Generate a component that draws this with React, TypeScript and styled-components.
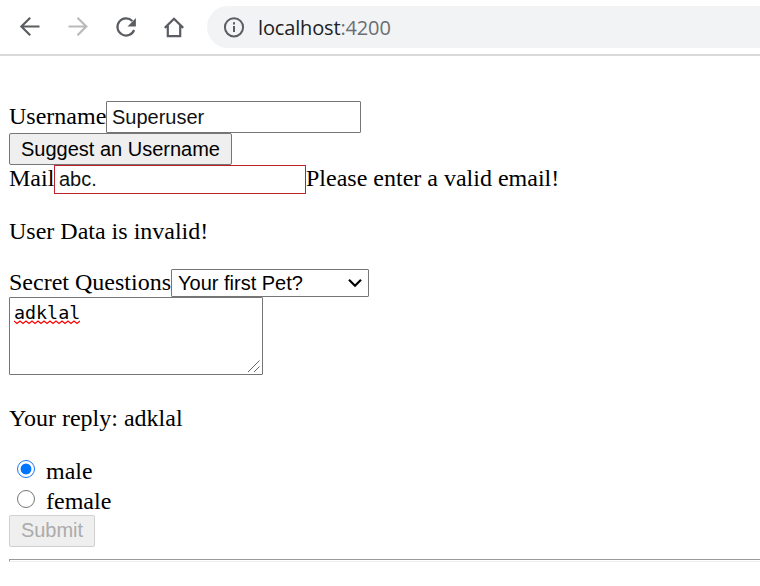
import React, { useState } from "react";
import styled, { createGlobalStyle } from "styled-components";

const GlobalStyle = createGlobalStyle`
  * { box-sizing: border-box; }
  body { margin: 0; background: #fff; color: #000; overflow: hidden; }
`;

const Page = styled.div`
  width: 100%;
  height: 586px;
  overflow: hidden;
  font: 24px/28px "Liberation Serif", "Times New Roman", serif;
`;

const Toolbar = styled.header`
  display: flex;
  align-items: center;
  height: 56px;
  padding-left: 18px;
  border-bottom: 2px solid #d9dadc;
`;

const NavButton = styled.button<{ $muted?: boolean }>`
  display: flex;
  width: 24px;
  height: 24px;
  margin-right: 24px;
  padding: 0;
  border: 0;
  background: none;
  color: ${(p) => (p.$muted ? "#b8babc" : "#5a5d61")};
`;

const AddressBar = styled.div`
  display: flex;
  align-items: center;
  flex: 1;
  height: 42px;
  margin-left: -3px;
  padding-left: 16px;
  border-radius: 21px 0 0 21px;
  background: #f1f3f4;
  color: #202124;
  font: 20px/28px "Open Sans", "Noto Sans", sans-serif;
`;

const Url = styled.span`
  margin-left: 13px;
  padding-top: 2px;
  letter-spacing: -0.15px;
  span { color: #6b6e72; }
`;

const Form = styled.form`
  display: flex;
  flex-direction: column;
  align-items: flex-start;
  padding: 45px 0 0 9px;
`;

const Row = styled.div<{ $height: number; $gap?: number; $shift?: number }>`
  display: flex;
  align-items: flex-start;
  width: 100%;
  height: ${(p) => p.$height}px;
  margin-top: ${(p) => p.$gap ?? 0}px;
  > label, > span { margin-top: ${(p) => p.$shift ?? 0}px; }
`;

const Label = styled.label<{ $width?: number }>`
  flex: none;
  width: ${(p) => (p.$width ? `${p.$width}px` : "auto")};
  white-space: nowrap;
`;

const Message = styled.p<{ $gap: number }>`
  margin: ${(p) => p.$gap}px 0 0;
`;

const TextInput = styled.input<{ $invalid?: boolean }>`
  appearance: none;
  width: ${(p) => (p.$invalid ? 252 : 255)}px;
  height: ${(p) => (p.$invalid ? 29 : 32)}px;
  margin: 0;
  padding: 0 ${(p) => (p.$invalid ? 4 : 5)}px;
  border: 1px solid ${(p) => (p.$invalid ? "#c02028" : "#767676")};
  border-radius: ${(p) => (p.$invalid ? 0 : 1)}px;
  outline: 0;
  background: #fff;
  color: #111;
  font: 20px "Liberation Sans", Arial, sans-serif;
`;

const PushButton = styled.button<{ $width: number }>`
  width: ${(p) => p.$width}px;
  height: 32px;
  padding: 0;
  border: 1px solid #767676;
  border-radius: 2px;
  background: #efefef;
  color: #000;
  font: 20px "Liberation Sans", Arial, sans-serif;
  &:disabled { padding-bottom: 2px; border-color: #d0d0d0; color: #ababab; }
`;

const SelectBox = styled.div`
  display: grid;
  width: 198px;
  height: 28px;
  > * { grid-area: 1 / 1; }
  > svg { justify-self: end; align-self: center; margin-right: 6px; pointer-events: none; }
`;

const Select = styled.select`
  appearance: none;
  padding: 0 6px;
  border: 1px solid #767676;
  border-radius: 1px;
  background: #fff;
  color: #000;
  font: 20px "Liberation Sans", Arial, sans-serif;
`;

const AnswerBox = styled.div`
  display: grid;
  width: 254px;
  height: 78px;
  > * { grid-area: 1 / 1; }
  > svg { pointer-events: none; }
`;

const Answer = styled.textarea`
  resize: none;
  margin: 0;
  padding: 3px 4px;
  border: 1px solid #767676;
  border-radius: 1px;
  outline: 0;
  background: #fff;
  color: #000;
  font: 18.33px/24px "DejaVu Sans Mono", Consolas, monospace;
`;

const SpellingMark = styled.svg`
  margin: 23px 0 0 5px;
`;

const Grip = styled.svg`
  place-self: end;
  margin: 0 2px 2px 0;
`;

const Radio = styled.input`
  appearance: none;
  flex: none;
  width: 18px;
  height: 18px;
  margin: 3px 11px 0 8px;
  border: 1.5px solid #767676;
  border-radius: 50%;
  background: #fff;
  &:checked {
    border-color: #1a78f2;
    background: radial-gradient(circle, #0075ff 5px, #fff 5.8px);
  }
`;

const Divider = styled.hr`
  align-self: stretch;
  height: 3px;
  margin: 12px 0 0;
  border: 1px solid #9a9a9a;
  border-right: 0;
  border-bottom-color: #eee;
`;

const BackIcon = () => (
  <svg width="24" height="24" viewBox="0 0 24 24" fill="none" stroke="currentColor" strokeWidth="2.2">
    <path d="M21.5 11.5H4M12.2 2.7L3.4 11.5l8.8 8.8" />
  </svg>
);

const ForwardIcon = () => (
  <svg width="24" height="24" viewBox="0 0 24 24" fill="none" stroke="currentColor" strokeWidth="2.2">
    <path d="M2.5 11.5H20M11.5 2.7l8.8 8.8-8.8 8.8" />
  </svg>
);

const ReloadIcon = () => (
  <svg width="24" height="24" viewBox="0 0 24 24" fill="none">
    <path d="M18.3 6A8.6 8.6 0 1 0 20.1 15" stroke="currentColor" strokeWidth="2.2" />
    <path d="M21.9 3v8.4h-8.4z" fill="currentColor" />
  </svg>
);

const HomeIcon = () => (
  <svg width="24" height="24" viewBox="0 0 24 24" fill="none" stroke="currentColor" strokeWidth="2.2">
    <path d="M2.8 12.9L12 3.7l9.2 9.2M5.8 10.8v10.4h12.4V10.8" />
  </svg>
);

const InfoIcon = () => (
  <svg width="22" height="22" viewBox="0 0 22 22" fill="none" stroke="#5a5d61" strokeWidth="2">
    <circle cx="11" cy="11.3" r="9.1" />
    <path d="M11 10.1v6M11 6.3v2.2" />
  </svg>
);

export default function App() {
  const [username, setUsername] = useState("Superuser");
  const [mail, setMail] = useState("abc.");
  const [reply, setReply] = useState("adklal");
  const [gender, setGender] = useState("male");

  return (
    <Page>
      <GlobalStyle />
      <Toolbar>
        <NavButton aria-label="Back"><BackIcon /></NavButton>
        <NavButton aria-label="Forward" $muted><ForwardIcon /></NavButton>
        <NavButton aria-label="Reload"><ReloadIcon /></NavButton>
        <NavButton aria-label="Home"><HomeIcon /></NavButton>
        <AddressBar>
          <InfoIcon />
          <Url>localhost<span>:4200</span></Url>
        </AddressBar>
      </Toolbar>
      <Form onSubmit={(e) => e.preventDefault()}>
        <Row $height={32} $shift={1}>
          <Label htmlFor="username" $width={97}>Username</Label>
          <TextInput id="username" value={username} onChange={(e) => setUsername(e.target.value)} />
        </Row>
        <PushButton type="button" $width={223} onClick={() => setUsername("Superuser")}>
          Suggest an Username
        </PushButton>
        <Row $height={29} $shift={-1}>
          <Label htmlFor="mail" $width={45}>Mail</Label>
          <TextInput id="mail" $invalid value={mail} onChange={(e) => setMail(e.target.value)} />
          <span>Please enter a valid email!</span>
        </Row>
        <Message $gap={23}>User Data is invalid!</Message>
        <Row $height={28} $gap={24} $shift={-1}>
          <Label htmlFor="secret" $width={162}>Secret Questions</Label>
          <SelectBox>
            <Select id="secret">
              <option>Your first Pet?</option>
            </Select>
            <svg width="16" height="12" viewBox="0 0 16 12" fill="none" stroke="#000" strokeWidth="2.2">
              <path d="M2 2.7l6 6 6-6" />
            </svg>
          </SelectBox>
        </Row>
        <AnswerBox>
          <Answer spellCheck={false} value={reply} onChange={(e) => setReply(e.target.value)} />
          <SpellingMark width="66" height="5" viewBox="0 0 66 5" fill="none" stroke="#f00" strokeWidth="1.2">
            <path d="M0 1l3 2.4 3-2.4 3 2.4 3-2.4 3 2.4 3-2.4 3 2.4 3-2.4 3 2.4 3-2.4 3 2.4 3-2.4 3 2.4 3-2.4 3 2.4 3-2.4 3 2.4 3-2.4 3 2.4 3-2.4 3 2.4 3-2.4" />
          </SpellingMark>
          <Grip width="14" height="14" viewBox="0 0 14 14" stroke="#666" strokeWidth="1">
            <path d="M1 13L12.5 1.5M7 13l5.5-5.5" />
          </Grip>
        </AnswerBox>
        <Message $gap={29}>Your reply: {reply}</Message>
        <Row $height={30} $gap={25}>
          <Radio id="male" type="radio" checked={gender === "male"} onChange={() => setGender("male")} />
          <Label htmlFor="male">male</Label>
        </Row>
        <Row $height={28}>
          <Radio id="female" type="radio" checked={gender === "female"} onChange={() => setGender("female")} />
          <Label htmlFor="female">female</Label>
        </Row>
        <PushButton type="submit" disabled $width={86}>Submit</PushButton>
        <Divider />
      </Form>
    </Page>
  );
}
